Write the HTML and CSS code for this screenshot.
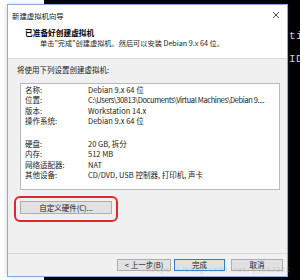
FILE: index.html
```html
<!DOCTYPE html>
<html lang="zh-CN">
<head>
    <meta charset="UTF-8">
    <title>新建虚拟机向导</title>
    <link rel="stylesheet" href="styles.css">
</head>
<body>
    <div class="term">
        <div>ti</div>
        <div>ID</div>
    </div>

    <div class="dialog">
        <div class="top">
            <div class="titlebar">
                <span class="title">新建虚拟机向导</span>
                <svg class="close" width="8" height="8" viewBox="0 0 8 8">
                    <path d="M1 1L7 7M7 1L1 7" stroke="#444" stroke-width="0.9" fill="none"/>
                </svg>
            </div>
            <div class="head">
                <div class="heading">已准备好创建虚拟机</div>
                <div class="sub">单击"完成"创建虚拟机。然后可以安装 Debian 9.x 64 位。</div>
            </div>
        </div>

        <div class="content">
            <div class="intro">将使用下列设置创建虚拟机:</div>
            <div class="list">
                <div class="row"><span class="key">名称:</span><span class="val">Debian 9.x 64 位</span></div>
                <div class="row"><span class="key">位置:</span><span class="val path">C:\Users\30813\Documents\Virtual Machines\Debian 9....</span></div>
                <div class="row"><span class="key">版本:</span><span class="val">Workstation 14.x</span></div>
                <div class="row"><span class="key">操作系统:</span><span class="val">Debian 9.x 64 位</span></div>
                <div class="spacer"></div>
                <div class="row"><span class="key">硬盘:</span><span class="val">20 GB, 拆分</span></div>
                <div class="row"><span class="key">内存:</span><span class="val">512 MB</span></div>
                <div class="row"><span class="key">网络适配器:</span><span class="val">NAT</span></div>
                <div class="row"><span class="key">其他设备:</span><span class="val">CD/DVD, USB 控制器, 打印机, 声卡</span></div>
            </div>
            <div class="highlight">
                <button class="btn custom">自定义硬件(C)...</button>
            </div>
        </div>

        <div class="footer">
            <button class="btn back">&lt; 上一步(B)</button>
            <button class="btn finish">完成</button>
            <button class="btn cancel">取消</button>
        </div>
    </div>

    <div class="watermark">https://blog.csdn.net/yjp12321</div>
</body>
</html>
```

FILE: styles.css
```css
body {
    margin: 0;
    width: 300px;
    height: 280px;
    overflow: hidden;
    position: relative;
    background: linear-gradient(to right, #fff 44px, #000 44px);
    font-family: "Noto Sans CJK SC", "Noto Sans", sans-serif;
    font-size: 7.5px;
    color: #1a1a1a;
}
.term {
    position: absolute;
    left: 289px;
    top: 25px;
    font-family: "Liberation Mono", monospace;
    font-size: 11px;
    line-height: 23px;
    color: #cfcfcf;
    letter-spacing: 0.5px;
}
.dialog {
    position: absolute;
    left: 7px;
    top: 4px;
    width: 279px;
    height: 271px;
    border: 1px solid #86acd9;
    background: #f0f0f0;
    box-shadow: 0 0 5px rgba(60, 90, 130, 0.25);
    display: flex;
    flex-direction: column;
}
.top {
    background: #fff;
    border-bottom: 1px solid #dadada;
    height: 53px;
}
.titlebar {
    height: 20px;
    display: flex;
    align-items: center;
    justify-content: space-between;
    padding: 0 7px 0 4px;
}
.title {
    font-size: 7.4px;
    color: #111;
}
.close {
    display: block;
}
.head {
    padding-top: 3px;
}
.heading {
    padding-left: 17px;
    font-weight: bold;
    font-size: 7.7px;
    line-height: 10px;
    color: #000;
}
.sub {
    padding-left: 32px;
    font-size: 7.2px;
    line-height: 10px;
}
.content {
    flex: 1;
}
.intro {
    padding: 6px 0 0 9px;
    line-height: 10px;
}
.list {
    margin: 8px 0 0 12px;
    width: 254px;
    height: 104px;
    background: #fff;
    border: 1px solid #b9b9b9;
    padding: 1px 0 0 4px;
    overflow: hidden;
}
.row {
    display: flex;
    line-height: 10.3px;
    white-space: nowrap;
}
.key {
    width: 63px;
    flex-shrink: 0;
}
.val {
    color: #222;
}
.path {
    letter-spacing: -0.4px;
}
.spacer {
    height: 13px;
}
.highlight {
    margin: 6px 0 0 6px;
    width: 92px;
    padding: 3px 4px 6px;
    border: 2px solid #e3262b;
    border-radius: 6px;
}
.btn {
    display: block;
    height: 12px;
    padding: 0;
    background: #e1e1e1;
    border: 1px solid #adadad;
    font-family: inherit;
    font-size: 7.5px;
    color: #1a1a1a;
    line-height: 10px;
}
.custom {
    width: 92px;
    height: 13px;
}
.footer {
    border-top: 1px solid #d9d9d9;
    height: 22px;
    display: flex;
    align-items: center;
    justify-content: flex-end;
    padding-right: 4px;
}
.back {
    width: 54px;
}
.finish {
    width: 51px;
    margin-left: 3px;
    border-color: #2b7fd4;
}
.cancel {
    width: 52px;
    margin-left: 6px;
}
.watermark {
    position: absolute;
    left: 146px;
    top: 265px;
    font-family: "Liberation Mono", monospace;
    font-size: 8px;
    line-height: 10px;
    color: rgba(150, 150, 150, 0.35);
}
```
